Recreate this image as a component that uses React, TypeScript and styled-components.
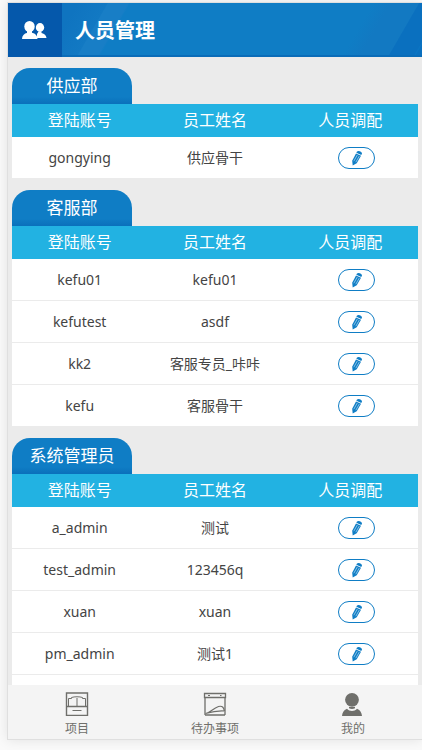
import React from "react";
import styled, { createGlobalStyle } from "styled-components";

const GlobalStyle = createGlobalStyle`
  *, *::before, *::after { box-sizing: border-box; }
  body {
    margin: 0;
    background: #fafafa;
    font-family: "Noto Sans", "Noto Sans CJK SC", sans-serif;
    color: #444;
  }
`;

const Page = styled.div`
  height: 100vh;
  padding: 2px 0 10px 7px;
  overflow: hidden;
`;

const Phone = styled.div`
  display: flex;
  flex-direction: column;
  height: 100%;
  border: 1px solid #dfdfdf;
  border-right: 0;
  background: #ebebeb;
  box-shadow: 0 0 12px rgba(0, 0, 0, 0.1);
`;

const Header = styled.header`
  display: flex;
  flex: none;
  height: 54px;
  color: #fff;
  background:
    linear-gradient(transparent 52px, #0a6cb8 52px),
    linear-gradient(300deg, #0a70bf 6px, #0a76c4 7px, #0a70bf 8px, #0a70bf 29px, transparent 30px),
    linear-gradient(120deg, #0f74c0 60px, #1279c3 86px, #187ec6 87px, #187ec6 104px, #0f7dc5 106px, #0f7dc5 82%, #1279c2 86%);
`;

const HeaderIcon = styled.div`
  display: flex;
  align-items: center;
  justify-content: center;
  width: 54px;
  height: 54px;
  background: #0558ab;
`;

const Title = styled.h1`
  margin: 0;
  padding-left: 13px;
  font-size: 20px;
  line-height: 56px;
  font-weight: 700;
`;

const List = styled.main`
  display: flex;
  flex: 1;
  flex-direction: column;
  gap: 11px;
  min-height: 0;
  padding: 11px 4px 0;
  overflow: hidden;
`;

const Department = styled.section`
  flex: none;

  &:last-child {
    flex: 1 0 auto;
    background: linear-gradient(#ebebeb 36px, #fff 36px);
  }
`;

const DepartmentName = styled.h2`
  width: 120px;
  margin: 0;
  border-radius: 18px 18px 0 0;
  background: linear-gradient(#0f7dc5 80%, #0a70bb);
  color: #fff;
  font-size: 17px;
  line-height: 36px;
  font-weight: 400;
  text-align: center;
`;

const Table = styled.table`
  width: 100%;
  table-layout: fixed;
  border-collapse: separate;
  border-spacing: 0;
  text-align: center;
`;

const HeadCell = styled.th`
  height: 33px;
  padding: 0 0 2px;
  background: #22b2e2;
  color: #fff;
  font-size: 16px;
  line-height: 20px;
  font-weight: 400;
`;

const Cell = styled.td`
  height: 42px;
  padding: 0;
  border-bottom: 1px solid #ebebeb;
  background: #fff;
  font-size: 14px;
  line-height: 20px;
`;

const ActionCell = styled(Cell)`
  padding-left: 12px;
`;

const EditButton = styled.button`
  display: flex;
  align-items: center;
  justify-content: center;
  width: 37px;
  height: 22px;
  margin: 0 auto;
  padding: 0 0 0 2px;
  border: 1px solid #0f7dc5;
  border-radius: 11px;
  background: #fff;
  color: #0f7dc5;
  cursor: pointer;
`;

const TabBar = styled.nav`
  display: flex;
  flex: none;
  height: 54px;
  background: #f4f4f4;
`;

const Tab = styled.a`
  display: flex;
  flex: 1;
  flex-direction: column;
  align-items: center;
  gap: 4px;
  padding-top: 7px;
  color: #6f6f6b;
  font-size: 12px;
  line-height: 18px;
  text-decoration: none;
`;

const UsersIcon = () => (
  <svg width="26" height="20" viewBox="0 0 26 20" fill="#fff" aria-hidden="true">
    <ellipse cx="18" cy="7.500" rx="4.200" ry="4.400" />
    <path d="M15 18v-4l1.500-2.500h3v1.500c3 .8 4.700 2.200 5 5z" />
    <path d="M0 19c0-3.500 2-5.300 5.500-6.200h4.500c3.500.9 5.500 2.700 5.500 6.200z" />
    <ellipse cx="7.500" cy="6.500" rx="6.200" ry="6.200" fill="#0558ab" />
    <ellipse cx="7.500" cy="6.500" rx="5.200" ry="5.500" />
    <path d="M5 11h5v3H5z" />
  </svg>
);

const PencilIcon = () => (
  <svg width="12" height="16" viewBox="0 0 12 16" aria-hidden="true">
    <path d="M5.800 1.800C7 .2 10.800 1.300 11 3.400l-.7 1.700-4.900-2.400z" fill="currentColor" />
    <path d="M5 3.400l5 2.400-4.300 7.400-4 2.300-.5-4.700z" fill="currentColor" />
    <path d="M6.300 5l-3.500 6.200M8.300 6l-3.500 6.200" stroke="#b9dcf2" strokeWidth=".7" />
  </svg>
);

const ProjectIcon = () => (
  <svg width="24" height="24" viewBox="0 0 24 24" fill="none" stroke="currentColor" aria-hidden="true">
    <path d="M1.500 1h21v22.500h-21z" strokeWidth="1.400" />
    <path d="M1.500 14.500h21" strokeWidth="1.500" />
    <path d="M3.500 14V6.500h3V5.500c3-1 8-1 11 0v1h3V14M12 6v8M7.500 18.500h9" />
  </svg>
);

const TodoIcon = () => (
  <svg width="24" height="24" viewBox="0 0 24 24" fill="none" stroke="currentColor" aria-hidden="true">
    <path d="M1.500 1.500h21v4h-21zM2 5.500v17.500M22 5.500v17.500M2 23h20" strokeWidth="1.300" />
    <path d="M5 3.500h2M17 3.500h1.500M2.500 21.500c5-.5 7-5 13-7 4-1 5 1 6 4.500M2.500 21.500c7-2 12-3 19-2.500" strokeWidth="1.200" />
  </svg>
);

const ProfileIcon = () => (
  <svg width="24" height="24" viewBox="0 0 24 24" fill="currentColor" aria-hidden="true">
    <circle cx="11" cy="7.800" r="6.900" />
    <path d="M8 15h6v1.200q-3 1.500-6 0z" />
    <path d="M1 24c.3-3.500 1.500-5.800 5-7.300 2.500 3 7.500 3 10 0 3.500 1.500 4.700 3.800 5 7.300z" />
  </svg>
);

const departments = [
  { name: "供应部", people: [["gongying", "供应骨干"]] },
  {
    name: "客服部",
    people: [
      ["kefu01", "kefu01"],
      ["kefutest", "asdf"],
      ["kk2", "客服专员_咔咔"],
      ["kefu", "客服骨干"],
    ],
  },
  {
    name: "系统管理员",
    people: [
      ["a_admin", "测试"],
      ["test_admin", "123456q"],
      ["xuan", "xuan"],
      ["pm_admin", "测试1"],
    ],
  },
];

const tabs = [
  { label: "项目", Icon: ProjectIcon },
  { label: "待办事项", Icon: TodoIcon },
  { label: "我的", Icon: ProfileIcon },
];

export default function App() {
  return (
    <>
      <GlobalStyle />
      <Page>
        <Phone>
          <Header>
            <HeaderIcon>
              <UsersIcon />
            </HeaderIcon>
            <Title>人员管理</Title>
          </Header>
          <List>
            {departments.map((department) => (
              <Department key={department.name}>
                <DepartmentName>{department.name}</DepartmentName>
                <Table>
                  <thead>
                    <tr>
                      <HeadCell scope="col">登陆账号</HeadCell>
                      <HeadCell scope="col">员工姓名</HeadCell>
                      <HeadCell scope="col">人员调配</HeadCell>
                    </tr>
                  </thead>
                  <tbody>
                    {department.people.map(([account, person]) => (
                      <tr key={account}>
                        <Cell>{account}</Cell>
                        <Cell>{person}</Cell>
                        <ActionCell>
                          <EditButton type="button" aria-label={`人员调配 ${account}`}>
                            <PencilIcon />
                          </EditButton>
                        </ActionCell>
                      </tr>
                    ))}
                  </tbody>
                </Table>
              </Department>
            ))}
          </List>
          <TabBar>
            {tabs.map(({ label, Icon }) => (
              <Tab key={label} href="#">
                <Icon />
                {label}
              </Tab>
            ))}
          </TabBar>
        </Phone>
      </Page>
    </>
  );
}
